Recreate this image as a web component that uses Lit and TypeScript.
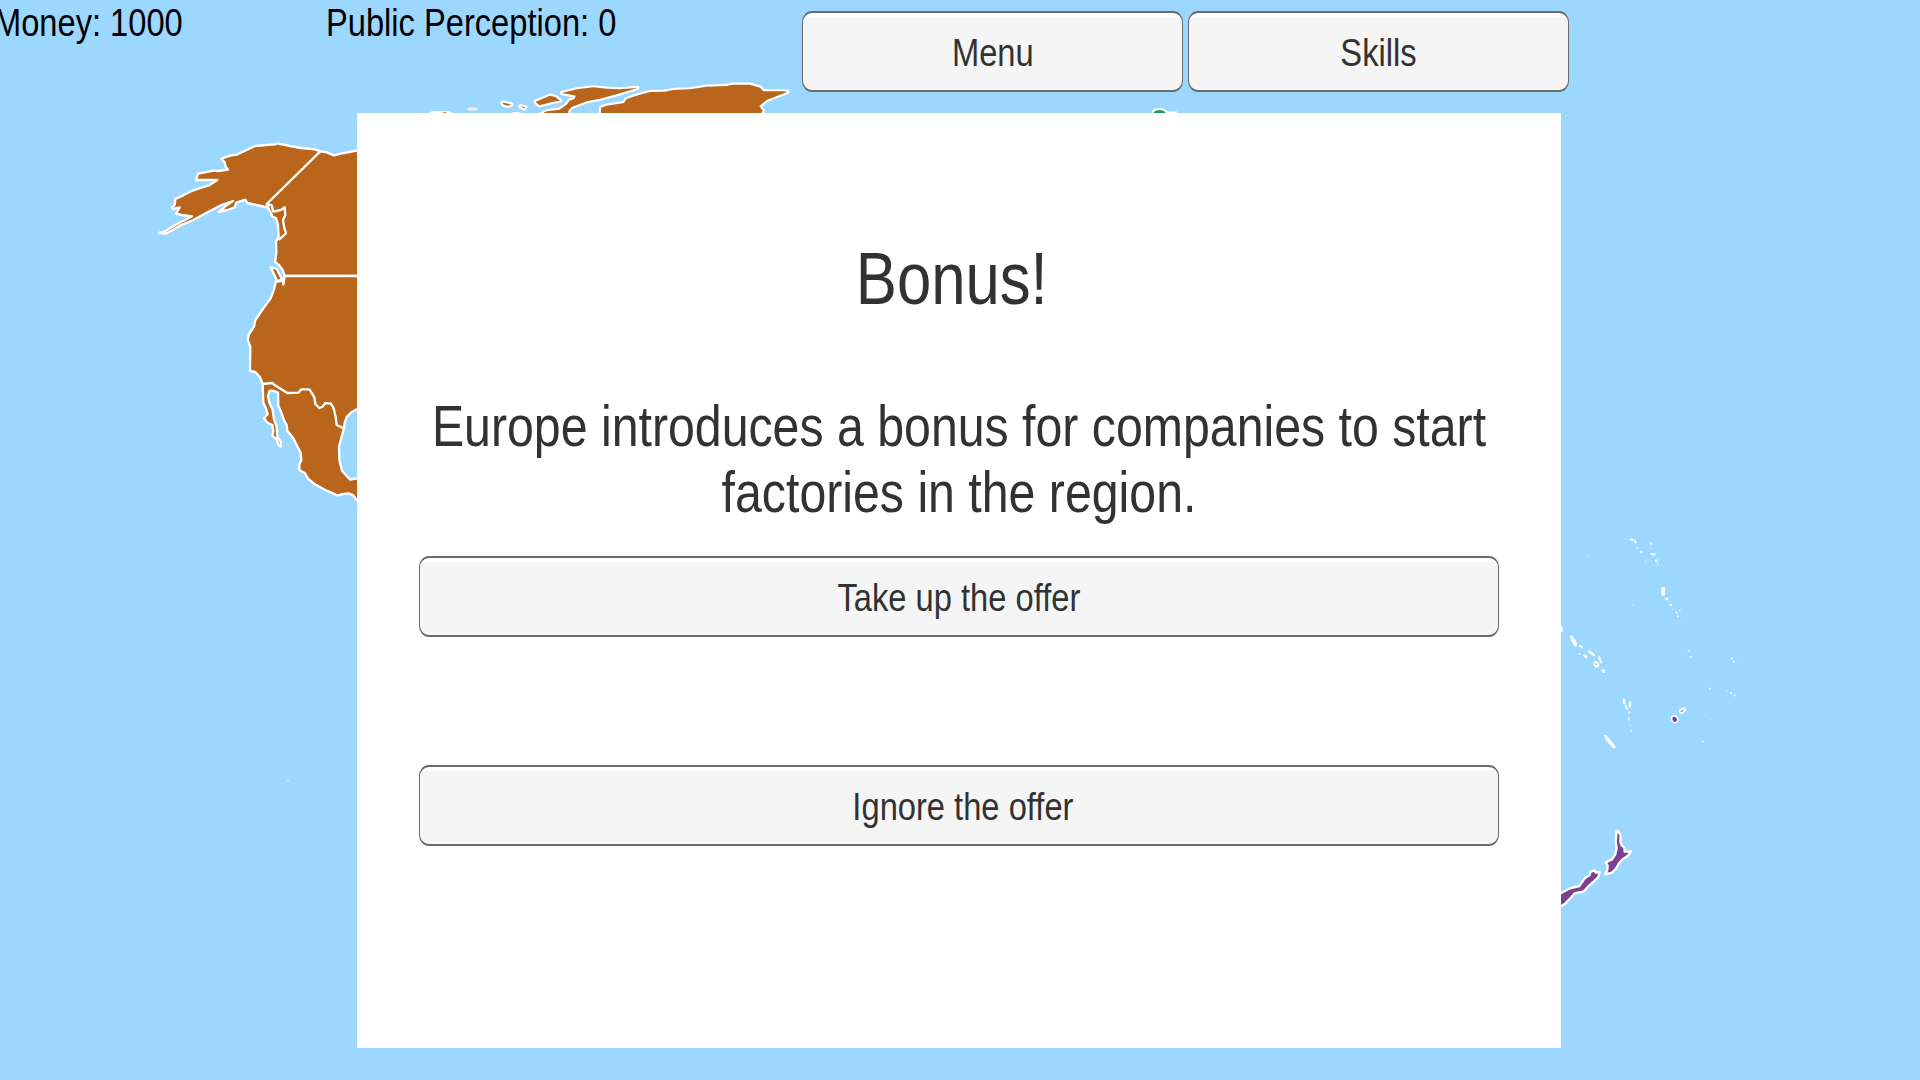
import { LitElement, html, css, svg } from "lit";
import { customElement, property } from "lit/decorators.js";

/** Small islands: x, y, rx, ry, rotation, opacity (units of a third of a pixel). */
const ISLETS: number[][] = [
  [246, 59, 8, 3.5, 5, 1], [256, 66, 3.5, 5, -20, 1], [261, 84, 3, 3, 0, 0.7], [273, 96, 4, 3.5, 0, 0.8],
  [279, 96, 2, 2.5, 0, 0.5], [287, 125, 2.5, 2.5, 0, 0.55], [303, 70, 3, 5, 0, 0.8], [303, 85, 2, 2, 0, 0.5],
  [310, 103, 8, 4, 0, 1], [319, 122, 4.5, 4, 40, 0.95], [325, 116, 2, 2, 0, 0.5], [324, 132, 2.5, 4, 0, 0.7],
  [116, 107, 2.5, 2.5, 0, 0.35], [249, 255, 2.5, 3, 0, 0.35], [350, 237, 5, 4, 35, 0.95], [362, 255, 4, 4, 0, 0.85],
  [369, 267, 2, 2, 0, 0.5], [380, 278, 3.5, 3.5, 0, 0.85], [389, 271, 3, 3, 0, 0.7], [384, 289, 3, 3, 0, 0.75],
  [397, 297, 2.5, 2.5, 0, 0.4], [93, 380, 7, 3.5, 38, 0.85], [88, 402, 3, 3, 0, 0.75], [106, 409, 8, 4, 42, 0.85],
  [125, 400, 13, 4, 38, 0.95], [150, 419, 13, 3.5, 68, 0.85], [160, 453, 6, 5, 45, 1], [418, 392, 3.5, 3, 0, 0.7],
  [411, 403, 2, 2, 0, 0.4], [422, 411, 4, 4, 0, 0.75], [546, 415, 3, 4, 0, 0.7], [552, 425, 3.5, 3, 0, 0.7],
  [561, 428, 2, 2, 0, 0.35], [480, 506, 4, 3.5, 0, 0.6], [531, 513, 2.5, 2.5, 0, 0.5], [543, 519, 3.5, 3, 0, 0.7],
  [554, 526, 3.5, 3.5, 0, 0.65], [484, 599, 2.5, 2, 0, 0.4], [458, 665, 3.5, 3.5, 0, 0.65],
  [222, 544, 4, 9, -5, 1], [229, 562, 3, 9, -25, 0.9], [240, 553, 4, 10, 5, 0.95], [238, 577, 3.5, 3.5, 0, 0.8],
  [237, 597, 3, 5, 0, 0.7], [241, 618, 2.5, 2.5, 0, 0.5], [243, 632, 3, 3, 0, 0.65], [246, 645, 1.5, 1.5, 0, 0.35],
];

@customElement("world-map")
class WorldMap extends LitElement {
  static styles = css`
    :host { display: block; }
    svg { display: block; width: 100%; height: 100%; }
    .land { stroke: #fff; stroke-width: 7; stroke-linejoin: round; }
    .outlined { stroke: #fff; stroke-width: 13; stroke-linejoin: round; paint-order: stroke; }
    .line { fill: none; stroke: #fff; stroke-width: 7; stroke-linejoin: round; stroke-linecap: round; }
    .america { fill: #b9651b; }
    .oceania { fill: #7b3f93; }
    .europe { fill: #22a454; }
    .white { fill: #fff; }
    .pale { fill: #f3ebe4; }
  `;

  render() {
    return html`<svg viewBox="0 0 1920 1080">
      <g transform="translate(140 120) scale(.33333)">
        <path class="land america" d="M700 85L651 91 628 96 605 100 582 106 560 97 541 94 525 88 483 84 450 78 412 70 405 73 378 75 345 78 320 90 290 104 270 107 244 116 254 127 257 140 264 149 234 153 220 152 174 161 168 180 232 180 205 197 175 206 155 213 130 226 106 237 104 255 95 262 100 267 119 262 108 281 125 285 156 289 110 313 75 334 57 339 78 341 120 317 160 300 200 278 240 257 279 243 262 254 236 276 262 270 284 262 289 248 316 239 322 249 350 255 382 262 391 275 397 290 408 294 414 315 416 350 408 365 409 400 405 426 417 435 428 450 434 468 700 468Z"/>
        <path class="line" d="M541 94L380 252 395 256 400 275 422 270 434 262 436 285 429 300 432 320 438 340 418 358M380 252L386 264"/>
      </g>
      <g transform="translate(230 260) scale(.33333)">
        <path class="land america" d="M164 48H400V442L381 448 365 456 351 470 344 488 342 505 335 530 327 560 328 600 336 632 348 646 361 659 381 655 400 655V740L378 718 370 706 356 700 340 702 322 706 290 692 255 673 235 657 225 640 208 630 208 613 214 600 212 578 200 555 190 535 172 512 170 495 162 480 155 460 145 438 144 398 132 393 119 392 114 408 118 428 128 450 132 478 140 500 142 530 152 545 152 560 145 555 140 537 127 528 130 515 127 495 112 488 102 475 113 463 108 445 100 428 98 372 90 352 76 336 60 333 61 260 53 240 57 222 72 200 76 180 100 145 122 115 132 88 138 63 150 64 158 58 160 74Z"/>
        <path class="land america" d="M122 22L140 26 156 58 142 64Z"/>
        <path class="line" d="M98 372L127 369 135 376 172 399 205 398 214 388 238 388 246 400 253 412 256 432 268 444 278 440 286 429 303 431 311 445 317 470 320 495 335 502 342 505"/>
      </g>
      <g transform="translate(420 70) scale(.33333)">
        <path class="outlined america" d="M543 150V113L560 107 612 99 620 87 650 77 690 66 735 65 760 60 810 58 860 50 920 48 938 44 990 44 1020 53 1030 64 1090 64 1102 66 1078 75 1040 90 1018 108 1028 122 1013 150Z"/>
        <path class="outlined america" d="M362 133L380 124 418 119 440 104 449 92 462 88 468 77 426 69 470 58 520 52 560 56 600 58 652 54 600 70 540 86 500 94 455 111 445 122V140Z"/>
        <path class="outlined america" d="M347 95L390 77 406 81 420 92 400 95 358 106Z"/>
        <path class="outlined america" d="M247 98L256 99 274 104 262 107 250 103ZM301 109L316 112 312 115Z"/>
        <ellipse class="pale" cx="157" cy="117" rx="16" ry="5"/>
        <ellipse class="white" cx="62" cy="128" rx="34" ry="6"/>
        <ellipse class="america" cx="74" cy="128" rx="7" ry="1.5"/>
        <ellipse class="white" cx="290" cy="129" rx="13" ry="3"/>
      </g>
      <g>
        <ellipse class="white" cx="1159.500" cy="112" rx="8" ry="4"/>
        <ellipse class="europe" cx="1159.500" cy="113" rx="6" ry="3"/>
        <rect class="white" x="1166" y="111.500" width="11" height="2"/>
      </g>
      <g transform="translate(1550 520) scale(.33333)">
        ${ISLETS.map(([x, y, rx, ry, a, o]) => svg`<ellipse class="white" cx=${x} cy=${y} rx=${rx} ry=${ry} opacity=${o} transform="rotate(${a} ${x} ${y})"/>`)}
        <rect class="white" x="334" y="201" width="11" height="26" rx="4"/>
        <path class="white" d="M30 316L37 318 38 335 30 337ZM60 345L66 346 82 370 80 380 72 377 63 360ZM161 644L168 645 194 676 197 685 188 683 170 664Z"/>
        <ellipse class="white" cx="139" cy="433" rx="8" ry="10" transform="rotate(-15 139 433)"/>
        <ellipse class="oceania" cx="138" cy="433" rx="2" ry="2.500" opacity=".7"/>
        <ellipse class="white" cx="397" cy="572" rx="12" ry="8" transform="rotate(-35 397 572)"/>
        <ellipse class="oceania" cx="396" cy="573" rx="5" ry="2.500" opacity=".6" transform="rotate(-35 396 573)"/>
        <ellipse class="white" cx="374" cy="597" rx="11" ry="13" transform="rotate(-25 374 597)"/>
        <ellipse class="oceania" cx="374" cy="598" rx="6.500" ry="8" transform="rotate(-20 374 598)"/>
      </g>
      <g transform="translate(1550 820) scale(.33333)">
        <path class="land oceania" d="M200 33L205 34 212 46 211 65 215 76 223 82 224 95 243 94 234 107 218 118 207 130 198 146 186 158 165 163 172 150 173 137 167 127 186 118 196 103 200 84 197 65Z"/>
        <path class="land oceania" d="M20 230L35 218 60 205 88 198 104 175 119 165 122 155 134 151 137 158 149 156 145 171 130 186 114 200 102 214 74 220 60 236 44 252 20 266Z"/>
      </g>
      <circle class="white" cx="184" cy="769" r="1" opacity=".25"/>
      <circle class="white" cx="288" cy="781" r="1" opacity=".5"/>
    </svg>`;
  }
}

@customElement("game-button")
class GameButton extends LitElement {
  @property() label = "";
  static styles = css`
    :host { display: block; height: 81px; }
    .button {
      display: flex; align-items: center; justify-content: center;
      box-sizing: border-box; width: 100%; height: 100%; margin: 0; padding: 1px 0 0 var(--label-shift, 0px);
      border: solid #6b6b6b; border-width: 2px 1.500px; border-radius: 10px / 11px;
      background: linear-gradient(#fff 0, #fff 3px, #f5f5f5 5px, #f5f5f5 calc(100% - 2px), #fafafa 100%);
      color: #323232; font: 39px/45px "Liberation Sans", Arial, sans-serif;
    }
    .label { display: block; white-space: nowrap; transform: scaleX(.838); }
  `;
  render() {
    return html`<button class="button"><span class="label">${this.label}</span></button>`;
  }
}

@customElement("app-root")
class AppRoot extends LitElement {
  static styles = css`
    :host { display: block; }
    .screen {
      position: relative; display: flex; flex-direction: column; align-items: flex-start;
      width: 1920px; height: 1080px; overflow: hidden; background: #9cd7ff;
      font-family: "Liberation Sans", Arial, sans-serif; color: #323232;
    }
    .map { position: absolute; inset: 0; }
    .hud { position: relative; display: flex; align-items: flex-start; box-sizing: border-box; height: 113px; }
    .stat {
      font-size: 39px; line-height: 45px; color: #000; white-space: nowrap;
      transform: scaleX(.837); transform-origin: 0 0;
    }
    .money { width: 332px; margin-left: -6px; }
    .perception { width: 476px; }
    .actions { display: flex; gap: 5px; padding-top: 11px; }
    .action { width: 381px; }
    .dialog {
      position: relative; display: flex; flex-direction: column; align-items: center;
      box-sizing: border-box; width: 1204px; height: 935px; margin-left: 357px; padding: 121px 62px 0;
      background: #fff;
    }
    .title { margin: 0 0 0 -14px; font-size: 75px; line-height: 88px; font-weight: 400; transform: scaleX(.822); }
    .message {
      width: 1320px; margin: 71px 0 0; font-size: 58px; line-height: 65.500px;
      text-align: center; transform: scaleX(.832);
    }
    .option { width: 1080px; }
    .take { margin-top: 32px; }
    .ignore { margin-top: 128px; --label-shift: 8px; }
  `;

  render() {
    return html`<main class="screen">
      <world-map class="map"></world-map>
      <header class="hud">
        <div class="stat money">Money: 1000</div>
        <div class="stat perception">Public Perception: 0</div>
        <nav class="actions">
          <game-button class="action" label="Menu"></game-button>
          <game-button class="action" label="Skills"></game-button>
        </nav>
      </header>
      <section class="dialog">
        <h1 class="title">Bonus!</h1>
        <p class="message">Europe introduces a bonus for companies to start factories in the region.</p>
        <game-button class="option take" label="Take up the offer"></game-button>
        <game-button class="option ignore" label="Ignore the offer"></game-button>
      </section>
    </main>`;
  }
}
